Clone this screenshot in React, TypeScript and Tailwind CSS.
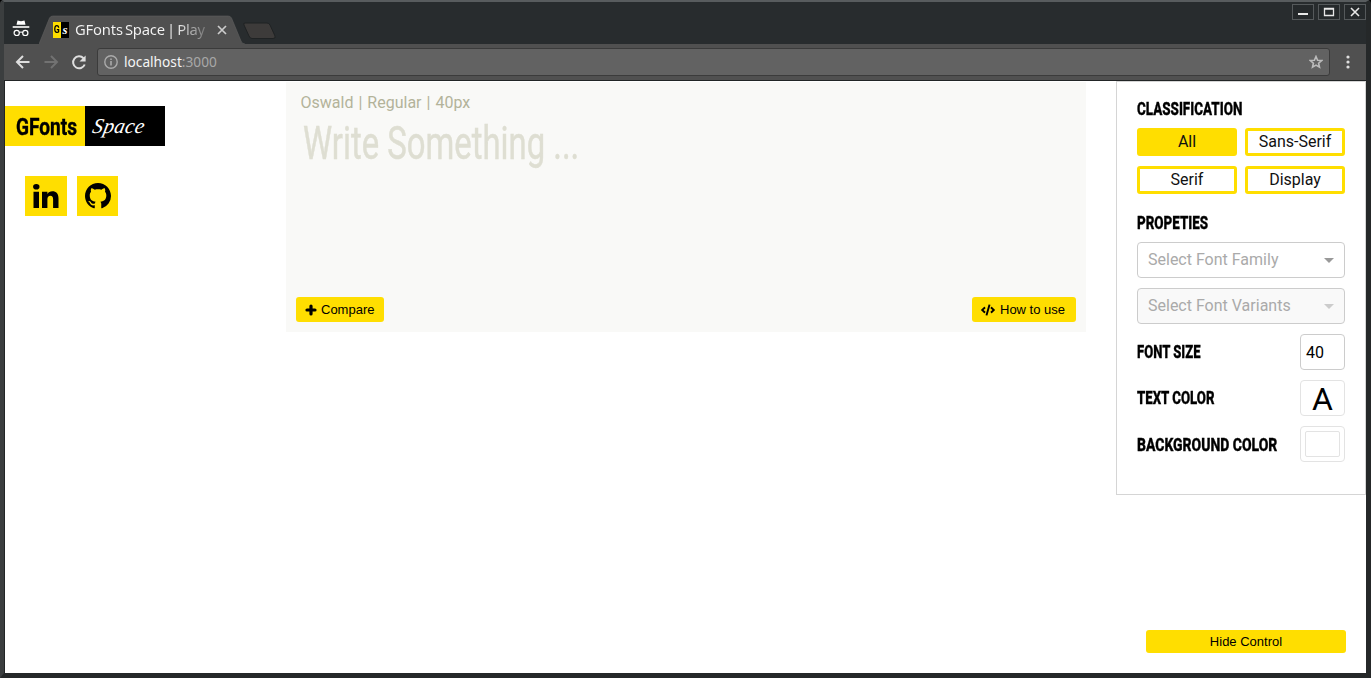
import React from "react";
import { FaCode } from "react-icons/fa";

const buttonFont = "font-['Liberation_Sans',sans-serif] text-[13px] leading-none text-black";

function Heading({ children, scale }: { children: React.ReactNode; scale: string }) {
  return (
    <h2 className={`origin-left whitespace-nowrap text-[18px] font-extrabold leading-6 text-black [-webkit-text-stroke:0.35px_black] ${scale}`}>{children}</h2>
  );
}

function WindowButton({ children }: { children: React.ReactNode }) {
  return (
    <button className="flex h-4 w-[22px] items-center justify-center border border-[#55595b] bg-[#25292b]">
      <svg width="12" height="12" viewBox="0 0 12 12" fill="none" stroke="#e8e8e8">
        {children}
      </svg>
    </button>
  );
}

function TitleBar() {
  return (
    <div className="flex h-[42px] items-start bg-[#282c2e]">
      <svg className="ml-2 mt-[18px] shrink-0" width="18" height="18" viewBox="0 0 18 18" fill="none">
        <path d="M5.500 0.500 L9 1.200 L12.500 0.500 L13.500 4.800 H4.500 Z" fill="#fff" />
        <path d="M0.700 7 H17.300" stroke="#fff" strokeWidth="1.600" />
        <circle cx="4.700" cy="12.900" r="2.600" stroke="#fff" strokeWidth="1.200" />
        <circle cx="13.300" cy="12.900" r="2.600" stroke="#fff" strokeWidth="1.200" />
        <path d="M7.200 12.500 Q9 11.500 10.800 12.500" stroke="#fff" strokeWidth="1.200" />
      </svg>
      <div className="relative ml-[9px] mt-[13px] flex h-[29px] w-[206px] shrink-0 items-center">
        <svg className="absolute inset-0" width="206" height="29" viewBox="0 0 206 29">
          <path d="M0 29 L10.500 3 Q11.500 1 14 1 H189 Q191.500 1 192.500 3 L202 26 Q203 29 206 29 Z" fill="#505050" />
          <path d="M0 29 L10.500 3 Q11.500 1 14 1 H189 Q191.500 1 192.500 3 L202 26 Q203 29 206 29" fill="none" stroke="#606060" strokeWidth="0.600" />
        </svg>
        <div className="relative ml-[14px] flex h-4 w-4 text-[11px] font-bold leading-4">
          <span className="w-2 bg-[#ffde00] text-center text-black"><span className="-ml-px inline-block scale-x-[0.8]">G</span></span>
          <span className="w-2 bg-black text-center font-['Liberation_Serif',serif] text-[13px] italic text-white">s</span>
        </div>
        <div className="relative -mt-0.5 ml-[6px] w-[134px] whitespace-nowrap bg-[linear-gradient(to_right,#f4f4f4_75%,#686868_100%)] bg-clip-text font-['Noto_Sans',sans-serif] text-[14.8px] leading-5 tracking-[-0.2px] text-transparent [word-spacing:-1.5px]">
          GFonts Space | Play
        </div>
        <svg className="relative ml-2" width="10" height="10" viewBox="0 0 10 10" stroke="#ccc" strokeWidth="1.700">
          <path d="M1 1 L9 9 M9 1 L1 9" />
        </svg>
      </div>
      <svg className="ml-[-2px] mt-5 shrink-0" width="34" height="18" viewBox="0 0 34 18">
        <path d="M2 1 H24 Q26 1 27 3 L32 14 Q33 16.500 30 16.500 H9 Q7 16.500 6 14 L1 3 Q0 1 2 1Z" fill="#3d3b3a" stroke="#1f2223" />
      </svg>
      <div className="ml-auto mt-[2px] flex gap-1">
        <WindowButton><path d="M1 8 H11" strokeWidth="2" /></WindowButton>
        <WindowButton><path d="M1.500 2.500 H10.500 V9.500 H1.500 Z M1.500 3 H10.500" strokeWidth="1.300" /></WindowButton>
        <WindowButton><path d="M2 2 L10 10 M10 2 L2 10" strokeWidth="1.600" /></WindowButton>
      </div>
    </div>
  );
}

function Toolbar() {
  return (
    <div className="flex h-[37px] items-center border-b border-[#222526] bg-[#505050]">
      <svg className="ml-[11px]" width="15" height="14" viewBox="0 0 15 14" fill="none" stroke="#dedede" strokeWidth="2">
        <path d="M14.500 7 H2 M8 1 L2 7 L8 13" />
      </svg>
      <svg className="ml-[14px]" width="15" height="14" viewBox="0 0 15 14" fill="none" stroke="#727272" strokeWidth="2">
        <path d="M0.500 7 H13 M7 1 L13 7 L7 13" />
      </svg>
      <svg className="ml-[12px]" width="17" height="17" viewBox="0 0 17 17" fill="none" stroke="#dedede" strokeWidth="2">
        <path d="M12.500 4.200 A6 6 0 1 0 13.700 10.500" />
        <path d="M14.600 1.500 V7.500 H8.500 Z" fill="#dedede" stroke="none" />
      </svg>
      <div className="ml-[9px] flex h-7 w-[1233px] items-center rounded-[3px] border border-[#3b3b3b] bg-[#626262]">
        <svg className="ml-[6px]" width="14" height="14" viewBox="0 0 14 14" fill="none" stroke="#aaa" strokeWidth="1.400">
          <circle cx="7" cy="7" r="6.200" />
          <path d="M7 6 V10.500 M7 3.500 V5" strokeWidth="1.600" />
        </svg>
        <span className="ml-[6px] font-['Noto_Sans',sans-serif] text-[13.7px] leading-5 text-[#a8a8a8]">
          <span className="text-[#f5f5f5]">localhost</span>:3000
        </span>
        <svg className="ml-auto mr-[6px]" width="14" height="14" viewBox="0 0 14 14" fill="none" stroke="#bbb" strokeWidth="1.600">
          <path d="M7 1.500 L8.600 5.200 L12.700 5.500 L9.600 8.200 L10.500 12.200 L7 10.100 L3.500 12.200 L4.400 8.200 L1.300 5.500 L5.400 5.200 Z" />
        </svg>
      </div>
      <svg className="ml-[16px]" width="4" height="14" viewBox="0 0 4 14" fill="#dedede">
        <circle cx="2" cy="2" r="1.600" /><circle cx="2" cy="7" r="1.600" /><circle cx="2" cy="12" r="1.600" />
      </svg>
    </div>
  );
}

function Sidebar() {
  return (
    <aside className="w-[281px] shrink-0 pt-[25px]">
      <div className="flex h-10 w-40">
        <div className="flex w-20 items-center bg-[#ffde00] pl-[11px] pt-px">
          <span className="origin-left scale-x-[0.795] text-[24px] font-bold leading-none text-black [-webkit-text-stroke:0.4px_black]">GFonts</span>
        </div>
        <div className="flex w-20 items-center bg-black pl-2">
          <span className="origin-left -skew-x-12 font-['Liberation_Serif',serif] text-[21px] italic leading-none tracking-[0.3px] text-white">Space</span>
        </div>
      </div>
      <div className="ml-5 mt-[30px] flex gap-[10px]">
        <a className="flex h-10 w-[42px] items-center justify-center bg-[#ffde00] text-black">
          <svg width="26" height="26" viewBox="0 0 26 26" fill="currentColor">
            <ellipse cx="3.300" cy="3.700" rx="3.200" ry="2.800" />
            <path d="M0.500 8.700H6V25H0.500ZM9 8.700H14.400V11C15.400 9.400 17 8.300 19.400 8.300C23.200 8.300 25.500 10.700 25.500 15.600V25H20.100V16.300C20.100 14.100 19.300 12.700 17.400 12.700C15.400 12.700 14.400 14.100 14.400 16V25H9Z" />
          </svg>
        </a>
        <a className="flex h-10 w-[41px] items-center justify-center bg-[#ffde00] text-black">
          <svg width="26" height="26" viewBox="0 0 16 16" fill="currentColor">
            <path d="M8 0C3.580 0 0 3.580 0 8c0 3.540 2.290 6.530 5.470 7.590.4.070.55-.17.55-.38 0-.19-.01-.82-.01-1.490-2.010.37-2.530-.49-2.690-.94-.09-.23-.48-.94-.82-1.130-.28-.15-.68-.52-.01-.53.63-.01 1.080.58 1.230.82.72 1.210 1.870.87 2.330.66.07-.52.28-.87.51-1.070-1.780-.2-3.640-.89-3.640-3.950 0-.87.31-1.590.82-2.150-.08-.2-.36-1.020.08-2.120 0 0 .67-.21 2.200.82.64-.18 1.320-.27 2-.27s1.360.09 2 .27c1.530-1.040 2.200-.82 2.200-.82.44 1.100.16 1.920.08 2.120.51.56.82 1.270.82 2.150 0 3.070-1.870 3.750-3.650 3.950.29.25.54.73.54 1.480 0 1.070-.01 1.930-.01 2.200 0 .21.15.46.55.38A8.010 8.010 0 0 0 16 8c0-4.420-3.580-8-8-8z" />
          </svg>
        </a>
      </div>
    </aside>
  );
}

function Editor() {
  return (
    <main className="mt-px flex h-[250px] w-[800px] shrink-0 flex-col bg-[#f9f9f7]">
      <p className="ml-[14.5px] mt-[11px] text-base leading-5 text-[#b3b39a] [word-spacing:1.05px]">Oswald | Regular | 40px</p>
      <p className="ml-[17px] mt-[2px] origin-left scale-x-[0.714] whitespace-nowrap text-[46px] leading-[56px] text-[#deded2] [-webkit-text-stroke:0.5px_#deded2]">Write Something ...</p>
      <div className="mb-[10px] mt-auto flex justify-between px-[10px]">
        <button className={`flex h-[25px] w-[88px] items-center gap-[4px] rounded-[3px] bg-[#ffde00] pl-[9px] ${buttonFont}`}>
          <svg width="12" height="12" viewBox="0 0 12 12"><path d="M6 2V10M2 6H10" stroke="currentColor" strokeWidth="3.200" strokeLinecap="round" /></svg>
          Compare
        </button>
        <button className={`flex h-[25px] w-[104px] items-center gap-[5px] rounded-[3px] bg-[#ffde00] pl-[9px] ${buttonFont}`}><FaCode size={14} />How to use</button>
      </div>
    </main>
  );
}

function Select({ label, disabled }: { label: string; disabled?: boolean }) {
  return (
    <div className={`mb-[10px] flex h-9 items-center justify-between rounded border border-[#ccc] px-[10px] text-[#aaa] ${disabled ? "bg-[#f9f9f9]" : "bg-white"}`}>
      <span>{label}</span>
      <svg width="10" height="5" viewBox="0 0 10 5"><path d="M0 0H10L5 5Z" fill={disabled ? "#ccc" : "#999"} /></svg>
    </div>
  );
}

function Controls() {
  return (
    <section className="ml-[30px] h-[414px] w-[250px] border border-[#d5d5d5] px-5 pt-[15px]">
      <Heading scale="scale-x-[0.745]">CLASSIFICATION</Heading>
      <div className="mt-[7px] grid grid-cols-2 gap-x-2 gap-y-[10px] text-base">
        {["All", "Sans-Serif", "Serif", "Display"].map((name, i) => (
          <button key={name} className={`h-7 rounded-[3px] border-3 border-[#ffde00] pb-px leading-[20px] text-[#111] ${i === 0 ? "bg-[#ffde00]" : "bg-white"}`}>{name}</button>
        ))}
      </div>
      <div className="mb-[7px] mt-[17px]"><Heading scale="scale-x-[0.745]">PROPETIES</Heading></div>
      <Select label="Select Font Family" />
      <Select label="Select Font Variants" disabled />
      <div className="mb-[10px] flex h-9 items-center">
        <Heading scale="scale-x-[0.725]">FONT SIZE</Heading>
        <div className="ml-auto h-9 w-[45px] shrink-0 rounded border border-[#ccc] pl-[5px] leading-[35px] text-black">40</div>
      </div>
      <div className="mb-[10px] flex h-9 items-center">
        <Heading scale="scale-x-[0.735]">TEXT COLOR</Heading>
        <div className="ml-auto h-9 w-[45px] shrink-0 rounded border border-[#e3e3e3] text-center text-[32px] leading-9 text-black">A</div>
      </div>
      <div className="flex h-9 items-center">
        <div className="w-[150px] pt-[2px]"><Heading scale="scale-x-[0.775]">BACKGROUND COLOR</Heading></div>
        <div className="ml-auto h-9 w-[45px] shrink-0 rounded border border-[#e3e3e3] p-1"><div className="h-full rounded-[2px] border border-[#e3e3e3]" /></div>
      </div>
    </section>
  );
}

export default function App() {
  return (
    <div className="bg-black">
      <div className="flex h-[678px] w-[1371px] flex-col rounded-t-[4px] border-b-[5px] border-l-4 border-r-[5px] border-t-2 border-b-[#252829] border-l-[#3b3e3f] border-r-[#252829] border-t-[#585c5e] bg-[#222526] font-['Roboto',sans-serif]">
        <TitleBar />
        <Toolbar />
        <div className="ml-px flex grow flex-col bg-white">
          <div className="flex items-start">
            <Sidebar />
            <Editor />
            <Controls />
          </div>
          <button className={`mb-5 ml-auto mr-5 mt-auto h-[23px] w-[200px] rounded-[3px] bg-[#ffde00] ${buttonFont}`}>Hide Control</button>
        </div>
      </div>
    </div>
  );
}
